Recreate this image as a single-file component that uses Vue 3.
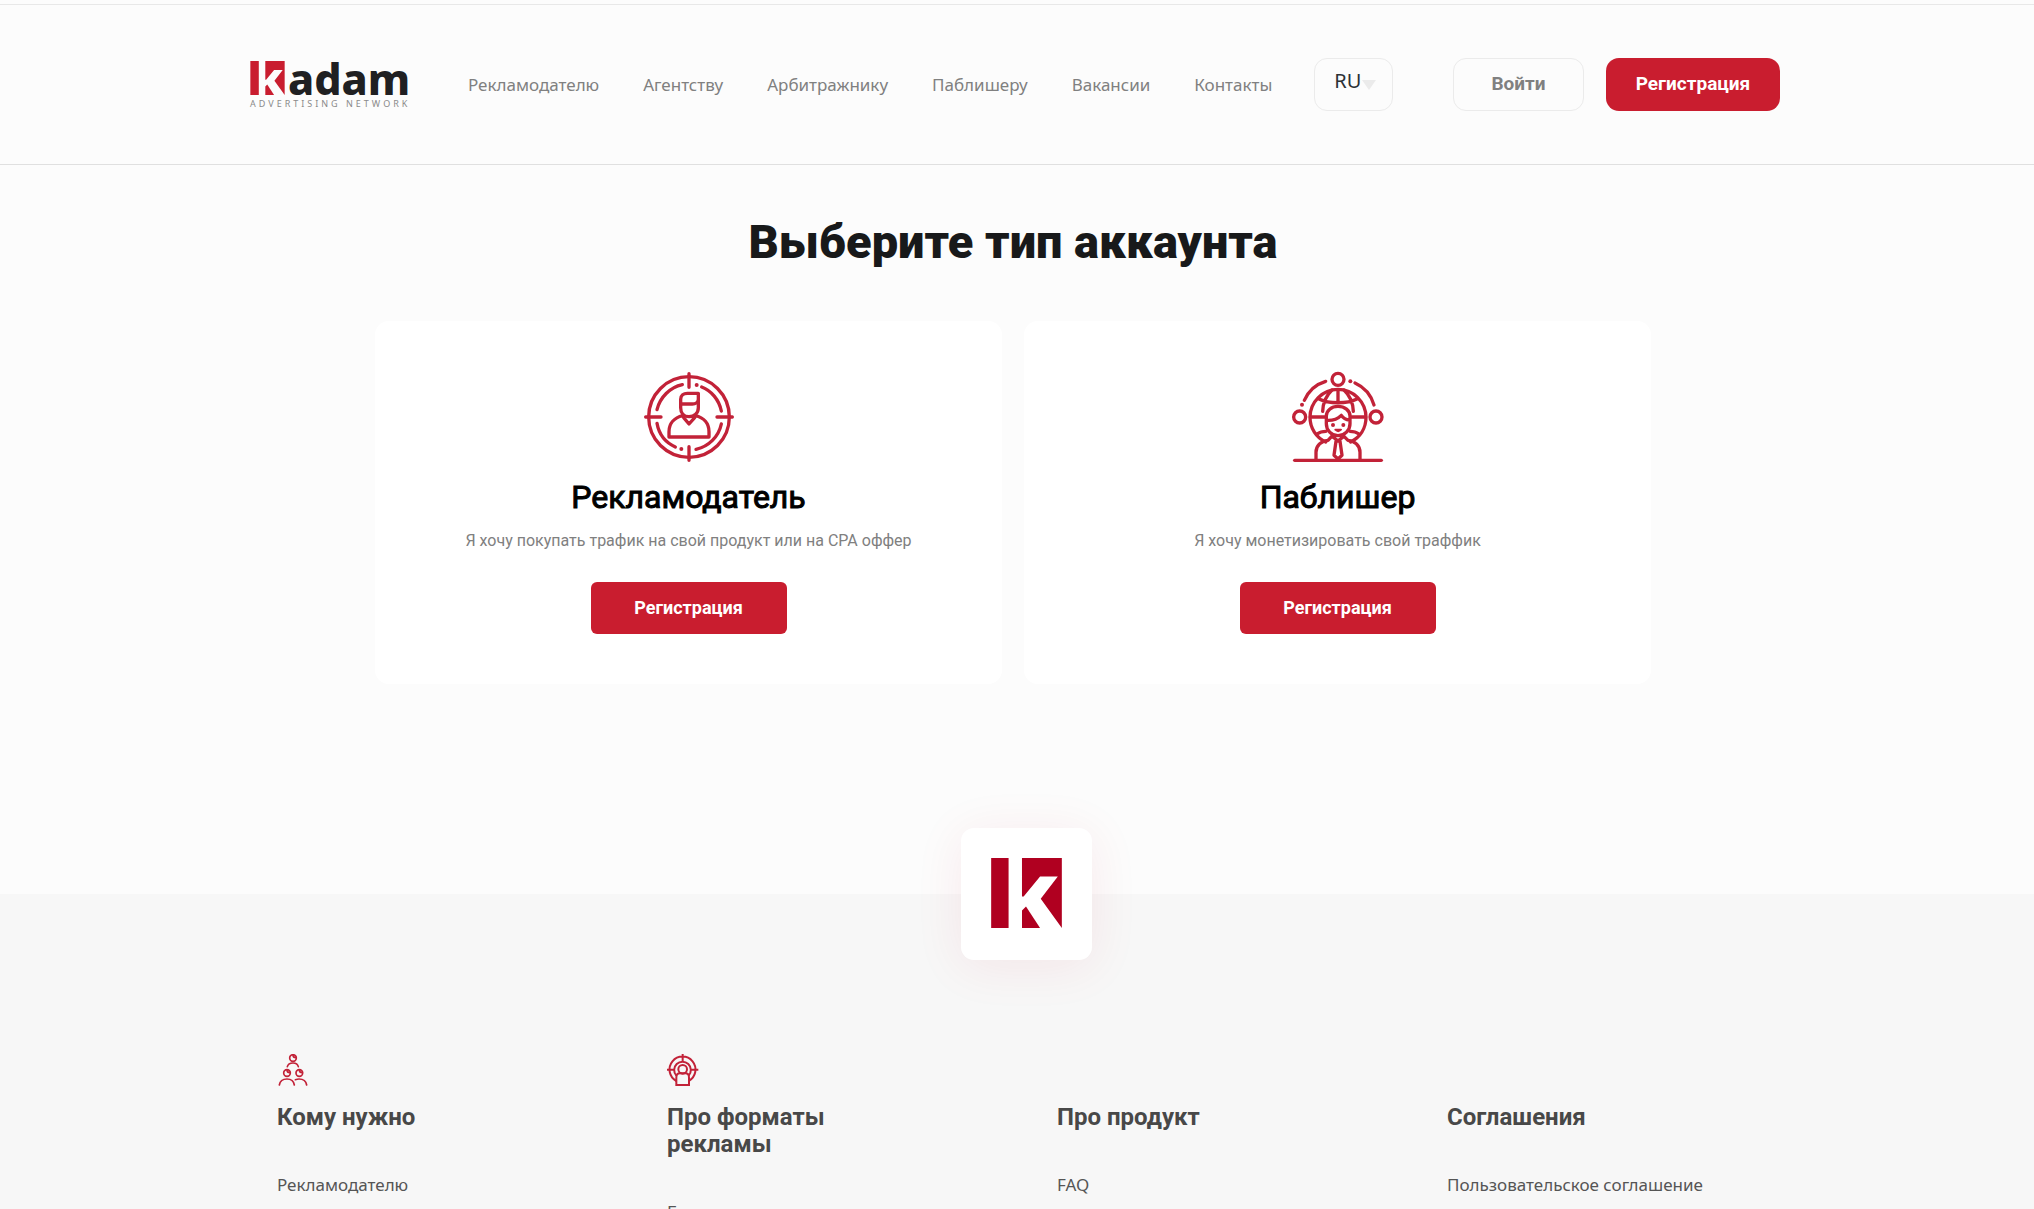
<template>
  <div class="page">
    <header class="header">
      <div class="header__inner">
        <a href="#" class="logo" aria-label="Kadam">
          <span class="logo__top">
            <svg class="logo__mark" viewBox="214 205 211 209" fill="#c91d2f">
              <path d="M214 205h52v209h-52z" />
              <path :d="markTop" />
              <path :d="markBottom" />
            </svg>
            <span class="logo__name">adam</span>
          </span>
          <span class="logo__tagline">ADVERTISING NETWORK</span>
        </a>
        <nav class="nav">
          <a v-for="item in menu" :key="item" href="#" class="nav__link">{{ item }}</a>
        </nav>
        <div class="lang">
          <select v-model="lang" class="lang__select" aria-label="Язык">
            <option>RU</option>
            <option>EN</option>
          </select>
          <svg class="lang__arrow" width="14" height="10" viewBox="0 0 14 10">
            <path d="M0 0h14L7 10z" fill="#ebebeb" />
          </svg>
        </div>
        <div class="auth">
          <button type="button" class="btn btn--login">Войти</button>
          <button type="button" class="btn btn--signup">Регистрация</button>
        </div>
      </div>
    </header>

    <main class="main">
      <h1 class="title">Выберите тип аккаунта</h1>
      <div class="cards">
        <section v-for="card in cards" :key="card.name" class="card">
          <svg
            v-if="card.icon === 'target'"
            class="card__icon"
            viewBox="70 66 270 270"
            fill="none"
            stroke="#c22238"
            stroke-width="10"
            stroke-linecap="round"
            stroke-linejoin="round"
          >
            <circle cx="205" cy="201" r="121" />
            <path d="M205 71v41M205 290v41M75 201h46M289 201h46" />
            <path
              d="M109 179C118 142 148 112 185 104M243 111C272 122 295 149 302 183M302 222C294 260 264 290 226 298M164 291C137 279 115 254 109 220"
            />
            <path
              d="M180 160v-12c0-12 9-18 20-18h33v43c0 16-12 27-28 27s-25-11-25-27zM180 162h35c10 0 17-6 18-14"
            />
            <path
              d="M186 197c-25 6-41 24-41 48v16h120v-16c0-24-15-42-41-48M189 203l16 19 17-19"
            />
            <g fill="#c22238" stroke="none">
              <circle cx="228" cy="105" r="6" />
              <circle cx="182" cy="297" r="6" />
            </g>
          </svg>
          <svg
            v-else
            class="card__icon"
            viewBox="70 66 270 270"
            fill="none"
            stroke="#c22238"
            stroke-width="10"
            stroke-linecap="round"
            stroke-linejoin="round"
          >
            <circle cx="205" cy="88" r="18" />
            <circle cx="90" cy="201" r="18" />
            <circle cx="319" cy="201" r="18" />
            <path d="M104 151C116 124 138 103 168 94M256 99C283 111 304 135 313 165" />
            <path
              d="M168 276C140 263 121 235 121 202c0-46 38-84 84-84s84 38 84 84c0 33-18 60-46 74"
            />
            <path
              d="M205 120v38M148 147c30 15 84 15 114 0M187 120c-17 16-27 38-28 64M223 120c17 16 27 38 28 64M122 201h45M243 201h45M142 252c7-5 17-8 27-8M268 252c-7-5-17-8-27-8"
            />
            <path
              d="M170 198c0-16 15-29 35-29s36 13 36 29v23c0 20-16 36-36 36s-35-16-35-36zM171 211c19 1 33-4 44-15 5 8 13 13 25 14"
            />
            <path d="M197 239c5 5 12 5 17 0z" stroke-width="6" />
            <path
              d="M139 327v-20c0-20 14-33 36-36l14-15M271 327v-20c0-20-14-33-36-36l-15-15M189 260l16 13 16-13M199 274l-6 42 12 11 12-11-6-42"
            />
            <path d="M75 331h260" />
            <g fill="#c22238" stroke="none">
              <circle cx="97" cy="164" r="6" />
              <circle cx="242" cy="94" r="6" />
              <circle cx="190" cy="225" r="6" />
              <circle cx="221" cy="225" r="6" />
            </g>
          </svg>
          <h2 class="card__name">{{ card.name }}</h2>
          <p class="card__text">{{ card.text }}</p>
          <button type="button" class="btn btn--card">Регистрация</button>
        </section>
      </div>
    </main>

    <footer class="footer">
      <div class="footer__badge-row">
        <div class="badge">
          <svg class="badge__mark" viewBox="214 205 211 209" fill="#b00020">
            <path d="M214 205h52v209h-52z" />
            <path :d="markTop" />
            <path :d="markBottom" />
          </svg>
        </div>
      </div>
      <div class="footer__columns">
        <section v-for="column in columns" :key="column.title" class="column">
          <div class="column__icon">
            <svg
              v-if="column.icon === 'people'"
              width="32"
              height="32"
              viewBox="0 0 96 96"
              fill="none"
              stroke="#c22238"
              stroke-width="5"
              stroke-linecap="round"
            >
              <g v-for="p in people" :key="p" :transform="p">
                <circle cx="0" cy="0" r="10" />
                <path d="M0-9c0 5 3 8 9 8" />
              </g>
              <path
                d="M31 38c2-8 7-11 17-11s14 3 16 11M7 93c2-13 9-18 23-18 13 0 20 5 22 18M55 77c3-1 7-2 11-2 13 0 21 5 23 18"
              />
            </svg>
            <svg
              v-if="column.icon === 'focus'"
              width="32"
              height="32"
              viewBox="0 0 96 96"
              fill="none"
              stroke="#c22238"
              stroke-width="6"
            >
              <path
                d="M28 81a39 39 0 1 1 37 0M28 65a25 25 0 1 1 37 0M47 0v24M0 47h24M70 47h24"
              />
              <circle cx="47" cy="46" r="13" />
              <path d="M28 93V71c0-8 5-13 11-13h16c6 0 11 5 11 13v22z" />
            </svg>
          </div>
          <h3 class="column__title">{{ column.title }}</h3>
          <a v-for="link in column.links" :key="link" href="#" class="column__link">{{ link }}</a>
        </section>
      </div>
    </footer>
  </div>
</template>

<script setup>
import { ref } from 'vue';

const lang = ref('RU');

// right part of the brand mark, shared by the header and the footer
const markTop = 'M306 205h119v209l-63-87 51-67h-53l-49 60h-5z';
const markBottom = 'M306 362l12-12 42 64h-54z';

const menu = [
  'Рекламодателю',
  'Агентству',
  'Арбитражнику',
  'Паблишеру',
  'Вакансии',
  'Контакты',
];

const cards = [
  {
    icon: 'target',
    name: 'Рекламодатель',
    text: 'Я хочу покупать трафик на свой продукт или на CPA оффер',
  },
  {
    icon: 'publisher',
    name: 'Паблишер',
    text: 'Я хочу монетизировать свой траффик',
  },
];

const people = ['translate(48 12)', 'translate(30 57)', 'translate(67 57)'];

const columns = [
  { icon: 'people', title: 'Кому нужно', links: ['Рекламодателю'] },
  { icon: 'focus', title: 'Про форматы рекламы', links: ['Баннеры'] },
  { title: 'Про продукт', links: ['FAQ'] },
  { title: 'Соглашения', links: ['Пользовательское соглашение'] },
];
</script>

<style>
body {
  margin: 0;
  background: #fcfcfc;
}
</style>

<style scoped>
.page {
  display: flex;
  flex-direction: column;
  height: 100vh;
  padding-top: 4px;
  box-sizing: border-box;
  overflow: hidden;
  font-family: Roboto, sans-serif;
  color: #18191a;
}
.page a {
  text-decoration: none;
}
.header {
  flex: none;
  border-top: 1px solid #e8e8e8;
  border-bottom: 1px solid #e0e0e0;
}
.header__inner {
  display: flex;
  align-items: center;
  max-width: 1534px;
  height: 159px;
  margin: 0 auto;
  padding-right: 4px;
  box-sizing: border-box;
}
.logo {
  display: flex;
  flex-direction: column;
  width: 162px;
  margin-right: 56px;
}
.logo__top {
  display: flex;
  align-items: flex-end;
  gap: 3px;
  height: 34px;
}
.logo__mark {
  width: 35px;
  height: 34px;
}
.logo__name {
  font: 800 43px/43px 'Noto Sans', sans-serif;
  color: #202022;
  margin-bottom: -5px;
}
.logo__tagline {
  margin-top: 4px;
  font: 9px/9px 'Noto Sans', sans-serif;
  letter-spacing: 3px;
  white-space: nowrap;
  color: #8a8a8a;
}
.nav {
  display: flex;
  gap: 44px;
}
.nav__link {
  font: 17px/26px 'Noto Sans', sans-serif;
  color: #808080;
}
.lang {
  position: relative;
  margin-left: 42px;
}
.lang__select {
  display: block;
  width: 79px;
  height: 53px;
  padding: 0 0 8px 19px;
  box-sizing: border-box;
  border: 1px solid #ebebeb;
  border-radius: 13px;
  background: transparent;
  appearance: none;
  font: 20px/26px 'Noto Sans', sans-serif;
  color: #2c3136;
}
.lang__arrow {
  position: absolute;
  top: 22px;
  right: 17px;
  pointer-events: none;
}
.auth {
  display: flex;
  gap: 22px;
  margin-left: auto;
}
.btn {
  height: 53px;
  padding-bottom: 2px;
  border: 0;
  font: 700 19px/24px Roboto, sans-serif;
  color: #ffffff;
  background: #c91d2f;
  cursor: pointer;
}
.btn--login {
  width: 131px;
  border: 1px solid #ebebeb;
  border-radius: 13px;
  background: transparent;
  color: #808080;
}
.btn--signup {
  width: 174px;
  border-radius: 13px;
}
.btn--card {
  width: 196px;
  height: 52px;
  margin-top: 29px;
  border-radius: 6px;
  font-size: 18px;
}
.main {
  flex: none;
  width: 100%;
  max-width: 1284px;
  margin: 0 auto;
  padding: 49px 8px 210px 0;
  box-sizing: border-box;
}
.title {
  margin: 0;
  font-size: 47px;
  line-height: 56px;
  font-weight: 900;
  text-align: center;
}
.cards {
  display: grid;
  grid-template-columns: 1fr 1fr;
  gap: 22px;
  margin-top: 51px;
}
.card {
  display: flex;
  flex-direction: column;
  align-items: center;
  padding: 51px 24px 50px;
  border-radius: 14px;
  background: #ffffff;
}
.card__icon {
  width: 90px;
  height: 90px;
  overflow: visible;
}
.card__name {
  margin: 16px 0 0;
  font-size: 32px;
  line-height: 38px;
  font-weight: 400;
  -webkit-text-stroke: 1px #000000;
  color: #000000;
}
.card__text {
  margin: 13px 0 0;
  font-size: 16px;
  line-height: 24px;
  color: #808080;
}
.footer {
  flex: 1 0 auto;
  background: #f7f7f7;
}
.footer__badge-row {
  display: flex;
  justify-content: center;
  margin-top: -66px;
  padding-left: 18px;
}
.badge {
  display: flex;
  align-items: center;
  justify-content: center;
  width: 131px;
  height: 132px;
  border-radius: 13px;
  background: #ffffff;
  box-shadow: 0 6px 50px rgba(201, 29, 47, 0.08);
}
.badge__mark {
  width: 71px;
  height: 70px;
  margin-bottom: 2px;
}
.footer__columns {
  display: grid;
  grid-template-columns: repeat(4, 1fr);
  gap: 80px;
  max-width: 1480px;
  margin: 94px auto 0;
}
.column {
  display: flex;
  flex-direction: column;
  align-items: flex-start;
}
.column__icon {
  height: 32px;
}
.column__title {
  max-width: 200px;
  margin: 18px 0 40px;
  font-size: 24px;
  line-height: 27px;
  font-weight: 700;
  color: #484848;
}
.column__link {
  font: 17px/28px 'Noto Sans', sans-serif;
  color: #555555;
}
</style>
